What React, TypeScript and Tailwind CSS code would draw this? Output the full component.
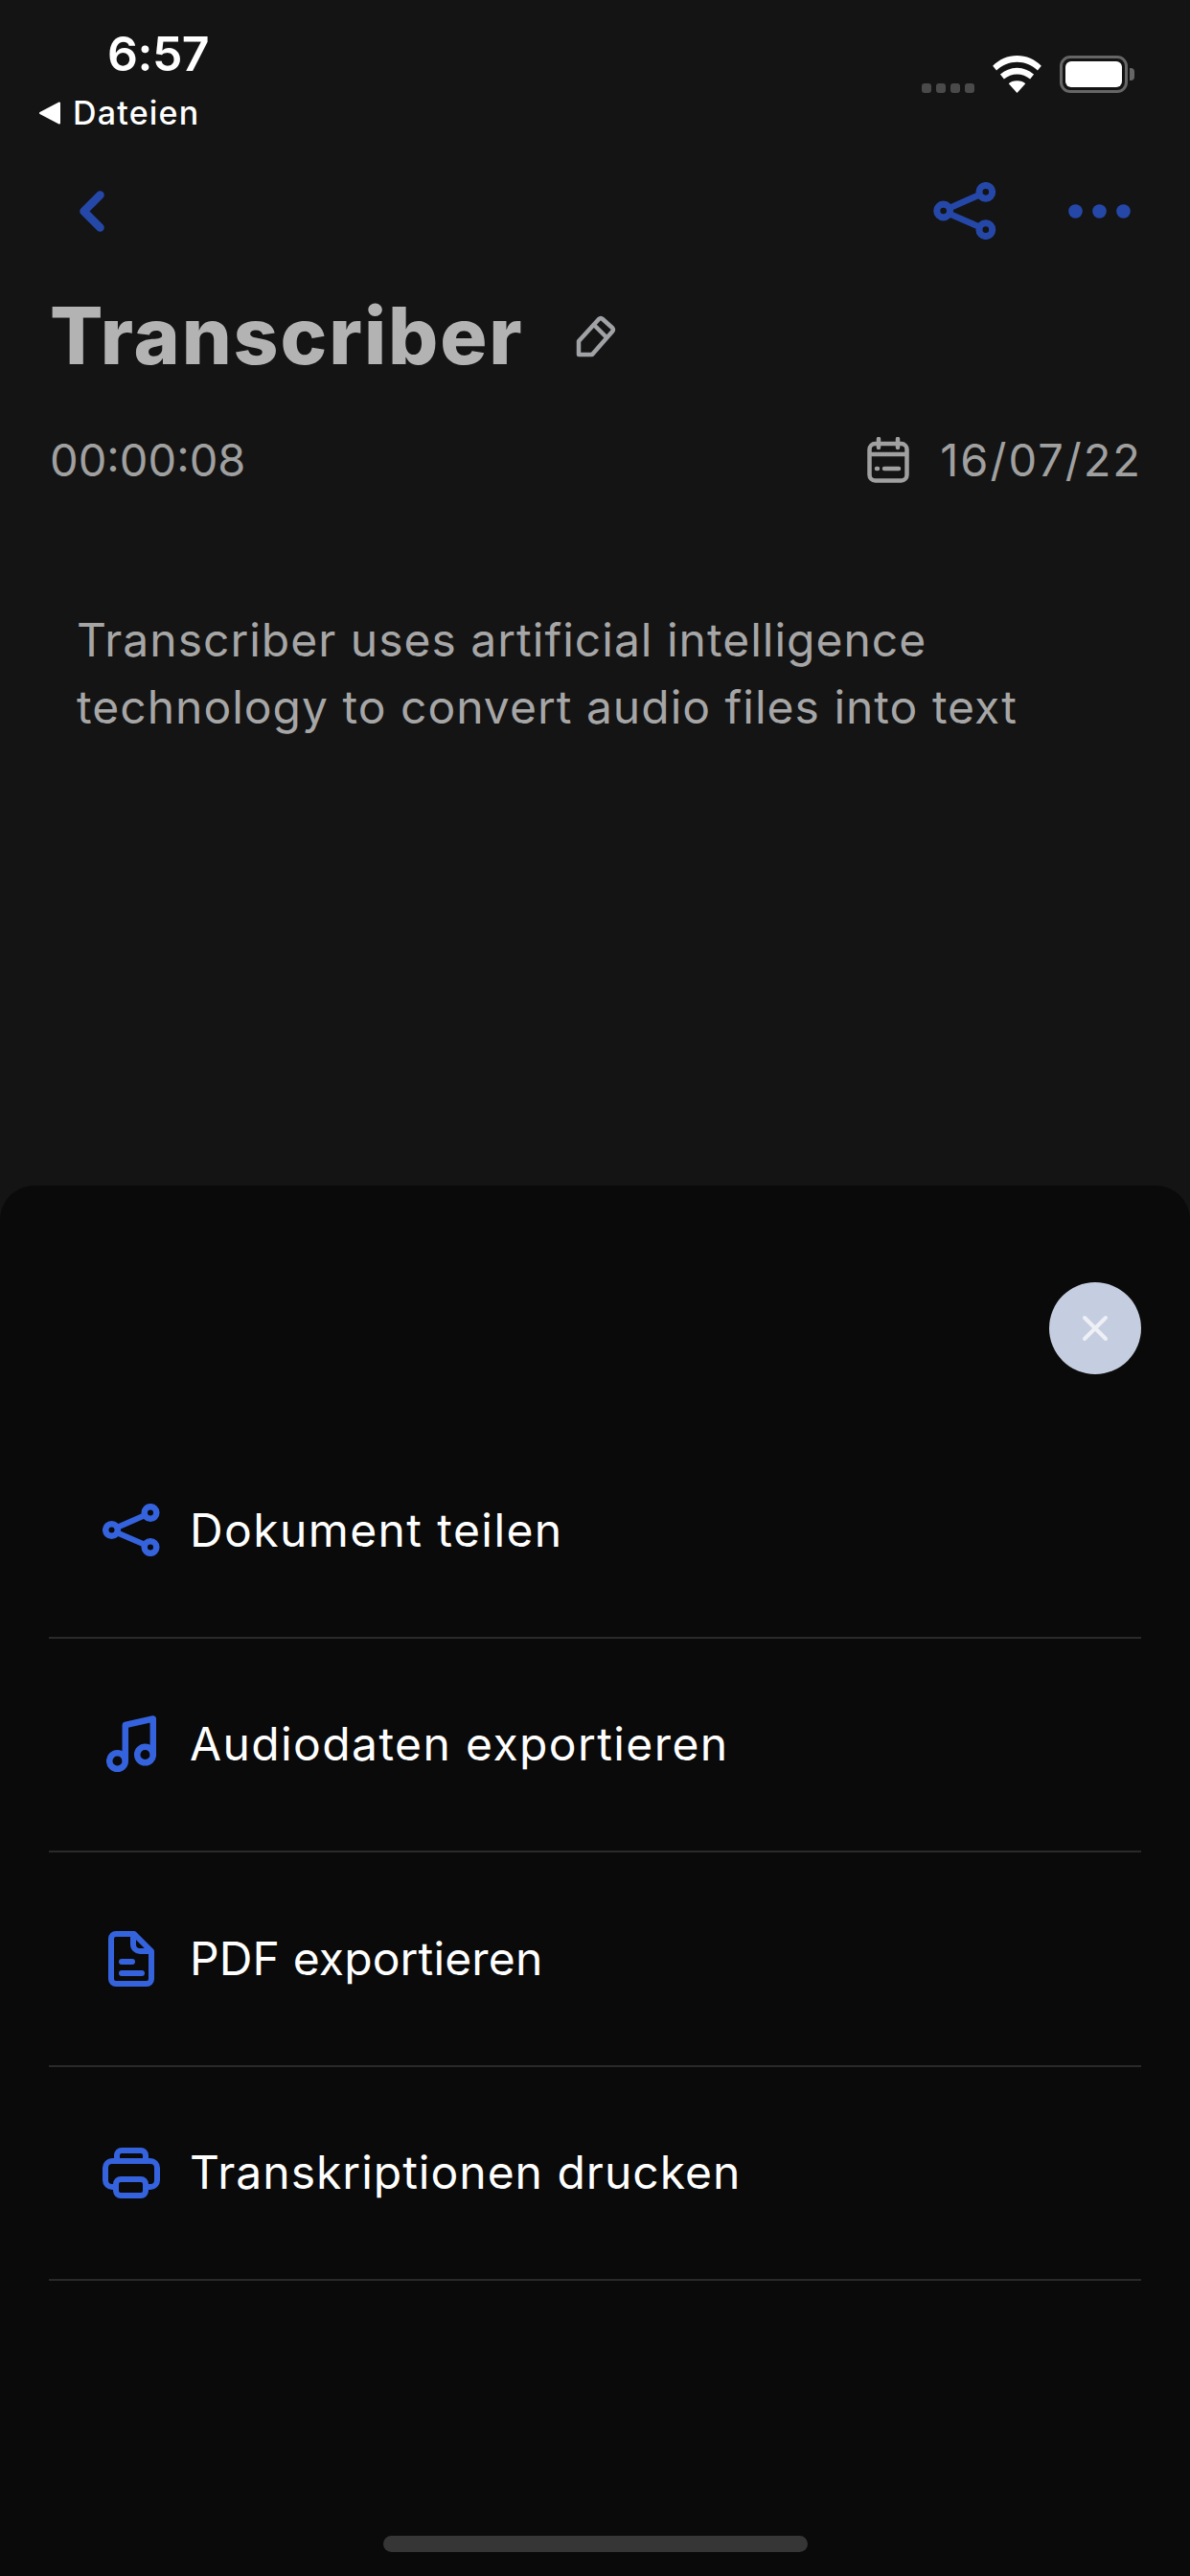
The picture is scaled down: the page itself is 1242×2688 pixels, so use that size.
import type { ReactNode } from 'react';

const FONT = "font-['Inter',sans-serif]";

function ShareIcon({ className }: { className: string }) {
  return (
    <svg viewBox="0 0 60 55" fill="none" stroke="currentColor" strokeWidth="6.5" className={className}>
      <circle cx="9.5" cy="27.5" r="6.3" />
      <circle cx="50" cy="9.5" r="6.3" />
      <circle cx="50" cy="45.5" r="6.3" />
      <path d="M15.500 24.800 44 12.200M15.500 30.500 44 42.800" strokeLinecap="round" strokeWidth="6" />
    </svg>
  );
}

function MusicIcon() {
  return (
    <svg viewBox="0 0 52 60" fill="none" stroke="currentColor" strokeWidth="6.5" strokeLinejoin="round" className="h-[60px] w-[52px]">
      <circle cx="11.5" cy="47.5" r="8.3" />
      <circle cx="40.5" cy="41" r="8.3" />
      <path d="M19.800 47V10L48.800 3.500V41" strokeLinecap="round" />
    </svg>
  );
}

function FileIcon() {
  return (
    <svg viewBox="0 0 48 58" fill="none" stroke="currentColor" strokeWidth="6" strokeLinecap="round" strokeLinejoin="round" className="h-[58px] w-[48px]">
      <path d="M8 3H27L45 21V50a5 5 0 0 1-5 5H8a5 5 0 0 1-5-5V8a5 5 0 0 1 5-5Z" />
      <path d="M26 4V14a7 7 0 0 0 7 7H44" />
      <path d="M14 32H25M14 44H35" />
    </svg>
  );
}

function PrinterIcon() {
  return (
    <svg viewBox="0 0 60 53" fill="none" stroke="currentColor" strokeWidth="6" strokeLinecap="round" className="h-[53px] w-[60px]">
      <path d="M12 41H10a7 7 0 0 1-7-7V21a7 7 0 0 1 7-7H50a7 7 0 0 1 7 7V34a7 7 0 0 1-7 7H48" />
      <path d="M15 14V8a5 5 0 0 1 5-5H40a5 5 0 0 1 5 5V14" />
      <rect x="14" y="33" width="31" height="17" rx="5" />
    </svg>
  );
}

function MenuRow({ icon, label, tracking }: { icon: ReactNode; label: string; tracking: string }) {
  return (
    <div className="flex h-[223.5px] items-center border-b-2 border-[#2a2a2a]">
      <div className="flex w-[147px] shrink-0 justify-center pl-[25px] text-[#3563dd]">{icon}</div>
      <span className={`text-[48px] leading-none font-normal text-white ${tracking}`}>{label}</span>
    </div>
  );
}

export default function App() {
  return (
    <div className={`${FONT} flex h-[2688px] w-[1242px] flex-col overflow-hidden bg-[#141414]`}>
      {/* dimmed page behind the sheet */}
      <div className="h-[1237px] shrink-0">
        <div className="flex h-[180px] justify-between pr-[58px] pl-[41px]">
          <div className="pt-[28px]">
            <div className="pl-[71px] text-[50px] leading-[56px] font-semibold tracking-[-0.5px] text-white">6:57</div>
            <div className="mt-[14px] flex items-center gap-[13px]">
              <svg viewBox="0 0 22 24" className="h-[24px] w-[22px] fill-white">
                <path d="M21 1.500V22.500L1 12Z" stroke="white" strokeWidth="2" strokeLinejoin="round" />
              </svg>
              <span className="text-[34px] leading-[40px] font-medium tracking-[1.2px] text-white">Dateien</span>
            </div>
          </div>
          <div className="flex items-start gap-[19px] pt-[58px]">
            <div className="mt-[29px] flex gap-[5px]">
              <span className="h-[10px] w-[10px] rounded-[3px] bg-[#4a4a4a]" />
              <span className="h-[10px] w-[10px] rounded-[3px] bg-[#4a4a4a]" />
              <span className="h-[10px] w-[10px] rounded-[3px] bg-[#4a4a4a]" />
              <span className="h-[10px] w-[10px] rounded-[3px] bg-[#4a4a4a]" />
            </div>
            <svg viewBox="0 0 52 40" className="h-[39px] w-[51px] fill-white">
              <path d="M26 0C16 0 7 4 0 11l4 5C10 10 18 7 26 7s16 3 22 9l4-5C45 4 36 0 26 0Z" />
              <path d="M26 13c-7 0-13 3-18 7l4 5c4-3 9-5 14-5s10 2 14 5l4-5c-5-4-11-7-18-7Z" />
              <path d="M26 27c-4 0-7 1-9 3l9 10 9-10c-2-2-5-3-9-3Z" />
            </svg>
            <div className="flex items-center">
              <div className="h-[39px] w-[71px] rounded-[11px] border-[3px] border-[#666] p-[3px]">
                <div className="h-full w-full rounded-[6px] bg-white" />
              </div>
              <div className="ml-[2px] h-[13px] w-[5px] rounded-r-[4px] bg-[#666]" />
            </div>
          </div>
        </div>

        <div className="flex h-[80px] items-center justify-between pr-[62px] pl-[83px] text-[#2548a8]">
          <svg viewBox="0 0 26 43" fill="none" stroke="currentColor" strokeWidth="8.5" strokeLinecap="round" strokeLinejoin="round" className="h-[43px] w-[26px]">
            <path d="M21.500 4.500 4.500 21.500 21.500 38.500" />
          </svg>
          <div className="flex items-center gap-[75px]">
            <ShareIcon className="h-[60px] w-[66px]" />
            <svg viewBox="0 0 65 15" className="h-[15px] w-[65px] fill-current">
              <circle cx="7.5" cy="7.5" r="7.3" />
              <circle cx="32.5" cy="7.5" r="7.3" />
              <circle cx="57.5" cy="7.5" r="7.3" />
            </svg>
          </div>
        </div>

        <div className="mt-[41px] flex items-center gap-[54px] pl-[52px]">
          <h1 className="text-[82px] leading-[100px] font-extrabold tracking-[1.9px] text-[#b3b3b3]">Transcriber</h1>
          <svg viewBox="0 0 42 44" fill="none" stroke="#a0a2a6" strokeWidth="4.5" strokeLinejoin="round" strokeLinecap="round" className="h-[44px] w-[42px]">
            <path d="M3 41V27L24 4a3 3 0 0 1 4 0L38 13a3 3 0 0 1 0 4L17 41Z" />
            <path d="M19 10 32 23" />
          </svg>
        </div>

        <div className="mt-[49px] flex items-center justify-between pr-[50px] pl-[52px] text-[#a0a0a0]">
          <span className="text-[47px] leading-[60px]">00:00:08</span>
          <div className="flex items-center gap-[32px]">
            <svg viewBox="0 0 44 48" fill="none" stroke="currentColor" strokeWidth="4.5" strokeLinecap="round" strokeLinejoin="round" className="h-[48px] w-[44px]">
              <rect x="2.500" y="7" width="39" height="38.500" rx="6" />
              <path d="M12 2V11M32 2V11M3 18H41M18 33H33M10 33H11" />
            </svg>
            <span className="text-[47px] leading-[60px] tracking-[2px]">16/07/22</span>
          </div>
        </div>

        <p className="mt-[123px] pl-[80px] text-[48px] leading-[70px] tracking-[1px] text-[#a6a6a6]">
          Transcriber uses artificial intelligence
          <br />
          technology to convert audio files into text
        </p>
      </div>

      {/* action sheet */}
      <div className="flex flex-1 flex-col rounded-t-[36px] bg-[#0a0a0a] px-[51px]">
        <div className="flex justify-end pt-[101px]">
          <button type="button" className="flex h-[96px] w-[96px] items-center justify-center rounded-full bg-[#c5cee0]">
            <svg viewBox="0 0 28 28" fill="none" stroke="#eef0f5" strokeWidth="4" strokeLinecap="round" className="h-[28px] w-[28px]">
              <path d="M3 3 25 25M25 3 3 25" />
            </svg>
          </button>
        </div>
        <div className="mt-[52px]">
          <MenuRow icon={<ShareIcon className="h-[55px] w-[60px]" />} label="Dokument teilen" tracking="tracking-[1.4px]" />
          <MenuRow icon={<MusicIcon />} label="Audiodaten exportieren" tracking="tracking-[1.4px]" />
          <MenuRow icon={<FileIcon />} label="PDF exportieren" tracking="tracking-[0.15px]" />
          <MenuRow icon={<PrinterIcon />} label="Transkriptionen drucken" tracking="tracking-[1px]" />
        </div>
        <div className="mt-auto mb-[25px] flex justify-center">
          <div className="h-[17px] w-[443px] rounded-full bg-[#363636]" />
        </div>
      </div>
    </div>
  );
}
